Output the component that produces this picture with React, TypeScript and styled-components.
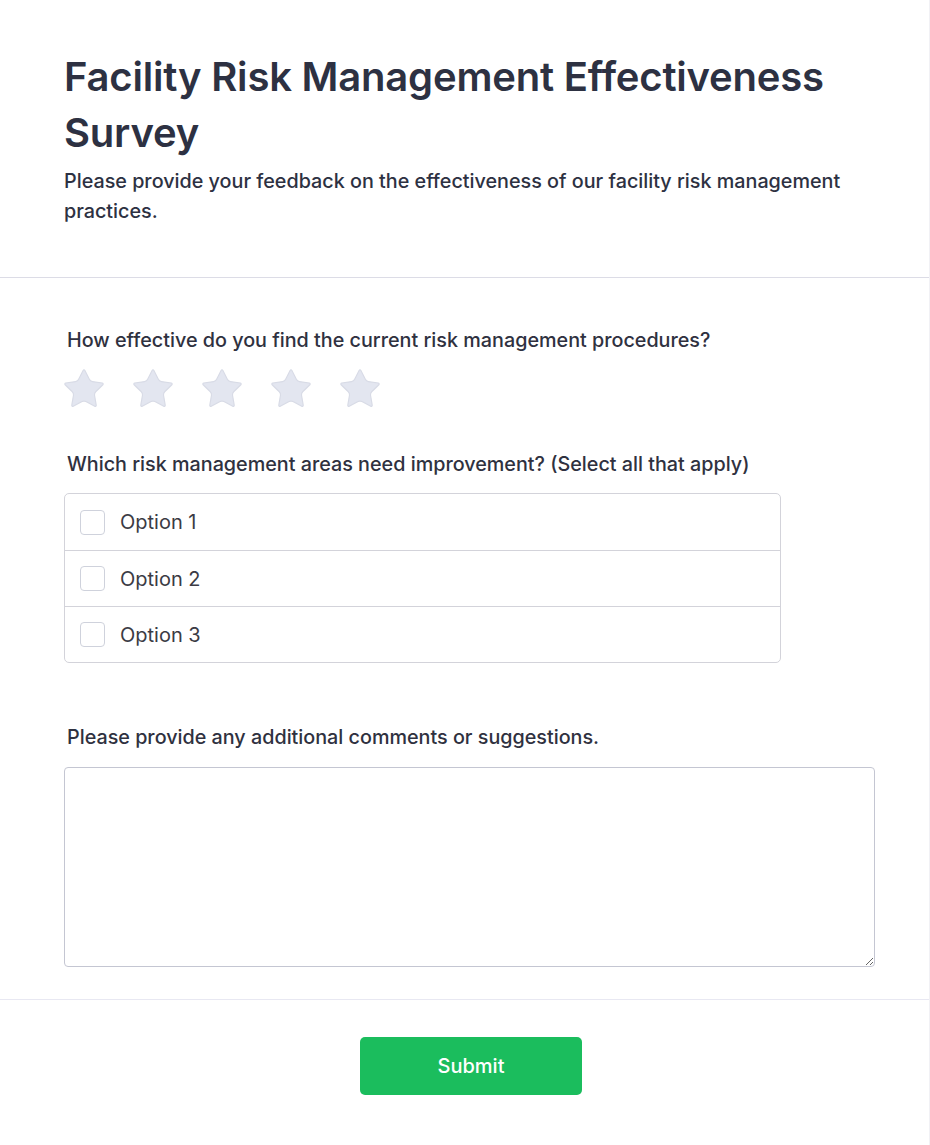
import { FC } from 'react'
import styled, { createGlobalStyle } from 'styled-components'

const GlobalStyle = createGlobalStyle`
  html, body {
    margin: 0;
    padding: 0;
    background: #ffffff;
  }
  * {
    box-sizing: border-box;
  }
`

const Page = styled.div`
  width: 930px;
  min-height: 1145px;
  background: #ffffff;
  border-right: 1px solid #f1f1f5;
  font-family: Inter, 'Noto Sans', sans-serif;
  color: #2d3142;
`

const Header = styled.header`
  padding: 49px 64px 51px;
  border-bottom: 1px solid #dcdce6;
`

const Title = styled.h1`
  margin: 0;
  font-size: 40px;
  line-height: 56px;
  font-weight: 600;
  color: #2d3142;
  letter-spacing: -0.2px;
`

const Description = styled.p`
  margin: 5px 0 0;
  font-size: 19.75px;
  line-height: 30px;
  font-weight: 500;
  color: #2d3142;
`

const Body = styled.main`
  padding: 49px 54px 32px 64px;
  border-bottom: 1px solid #e8e8f2;
`

const Question = styled.section<{ $gap?: number }>`
  margin-bottom: ${(p) => p.$gap ?? 0}px;
`

const Label = styled.label`
  display: block;
  padding-left: 3px;
  font-size: 19.75px;
  line-height: 27px;
  font-weight: 500;
  color: #2f3140;
`

const Stars = styled.div`
  display: flex;
  gap: 23px;
  margin: 12px 0 0 -3px;
`

const StarButton = styled.button`
  padding: 0;
  border: none;
  background: none;
  cursor: pointer;
  display: flex;
  width: 46px;
  height: 46px;
`

const OptionList = styled.div`
  margin-top: 15px;
  width: 717px;
  border: 1px solid #d3d3da;
  border-radius: 5px;
  overflow: hidden;
`

const OptionRow = styled.label`
  display: flex;
  align-items: center;
  gap: 15px;
  height: 56px;
  padding-left: 15px;
  font-size: 20px;
  color: #3b3b44;
  cursor: pointer;
  & + & {
    border-top: 1px solid #d3d3da;
  }
`

const Box = styled.span`
  width: 25px;
  height: 25px;
  border: 1px solid #cfd2dc;
  border-radius: 4px;
  background: #ffffff;
`

const Comments = styled.textarea`
  display: block;
  margin-top: 16px;
  width: 811px;
  height: 200px;
  border: 1px solid #c4c6d2;
  border-radius: 4px;
  font-family: Inter, sans-serif;
  font-size: 16px;
  padding: 10px;
  resize: vertical;
  outline: none;
`

const Footer = styled.footer`
  display: flex;
  justify-content: center;
  padding: 37px 0 50px 13px;
`

const SubmitButton = styled.button`
  width: 222px;
  height: 58px;
  border: none;
  border-radius: 5px;
  background: #1bbd5d;
  color: #ffffff;
  font-family: Inter, sans-serif;
  font-size: 20px;
  font-weight: 500;
  cursor: pointer;
`

const Star: FC = () => (
  <svg width="46" height="46" viewBox="0 0 24 24">
    <path
      d="M11.525 2.295a.53.53 0 0 1 .95 0l2.31 4.679a2.123 2.123 0 0 0 1.595 1.16l5.166.756a.53.53 0 0 1 .294.904l-3.736 3.638a2.123 2.123 0 0 0-.611 1.878l.882 5.14a.53.53 0 0 1-.771.56l-4.618-2.428a2.122 2.122 0 0 0-1.973 0L6.396 21.01a.53.53 0 0 1-.77-.56l.881-5.139a2.122 2.122 0 0 0-.611-1.879L2.16 9.795a.53.53 0 0 1 .294-.906l5.165-.755a2.122 2.122 0 0 0 1.597-1.16z"
      fill="#e3e6f0"
      stroke="#d8dbe6"
      strokeWidth="0.6"
      strokeLinejoin="round"
    />
  </svg>
)

const options = ['Option 1', 'Option 2', 'Option 3']

const App: FC = () => {
  return (
    <Page>
      <GlobalStyle />
      <Header>
        <Title>Facility Risk Management Effectiveness Survey</Title>
        <Description>
          Please provide your feedback on the effectiveness of our facility risk
          management practices.
        </Description>
      </Header>
      <Body>
        <Question $gap={39}>
          <Label>
            How effective do you find the current risk management procedures?
          </Label>
          <Stars>
            {[1, 2, 3, 4, 5].map((n) => (
              <StarButton key={n} type="button" aria-label={`${n} stars`}>
                <Star />
              </StarButton>
            ))}
          </Stars>
        </Question>
        <Question $gap={61}>
          <Label>
            Which risk management areas need improvement? (Select all that
            apply)
          </Label>
          <OptionList>
            {options.map((o) => (
              <OptionRow key={o}>
                <Box />
                {o}
              </OptionRow>
            ))}
          </OptionList>
        </Question>
        <Question>
          <Label>Please provide any additional comments or suggestions.</Label>
          <Comments />
        </Question>
      </Body>
      <Footer>
        <SubmitButton type="button">Submit</SubmitButton>
      </Footer>
    </Page>
  )
}

export default App
